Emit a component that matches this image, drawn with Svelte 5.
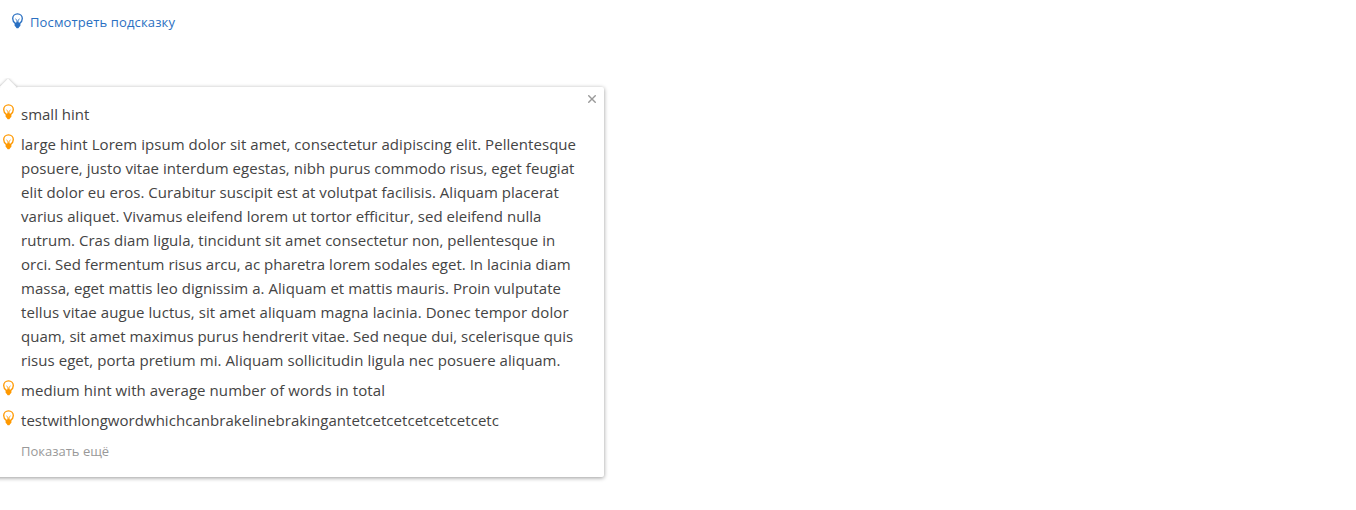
<script>
  const hints = [
    [{ text: 'small hint', tracking: 0 }],
    [
      { text: 'large hint Lorem ipsum dolor sit amet, consectetur adipiscing elit. Pellentesque', tracking: 0.05 },
      { text: 'posuere, justo vitae interdum egestas, nibh purus commodo risus, eget feugiat', tracking: 0.05 },
      { text: 'elit dolor eu eros. Curabitur suscipit est at volutpat facilisis. Aliquam placerat', tracking: 0.05 },
      { text: 'varius aliquet. Vivamus eleifend lorem ut tortor efficitur, sed eleifend nulla', tracking: 0.03 },
      { text: 'rutrum. Cras diam ligula, tincidunt sit amet consectetur non, pellentesque in', tracking: 0.03 },
      { text: 'orci. Sed fermentum risus arcu, ac pharetra lorem sodales eget. In lacinia diam', tracking: 0.015 },
      { text: 'massa, eget mattis leo dignissim a. Aliquam et mattis mauris. Proin vulputate', tracking: 0.045 },
      { text: 'tellus vitae augue luctus, sit amet aliquam magna lacinia. Donec tempor dolor', tracking: 0.075 },
      { text: 'quam, sit amet maximus purus hendrerit vitae. Sed neque dui, scelerisque quis', tracking: 0 },
      { text: 'risus eget, porta pretium mi. Aliquam sollicitudin ligula nec posuere aliquam.', tracking: 0.06 }
    ],
    [{ text: 'medium hint with average number of words in total', tracking: 0.075 }],
    [{ text: 'testwithlongwordwhichcanbrakelinebrakingantetcetcetcetcetcetcetc', tracking: 0.04 }]
  ];
</script>

{#snippet bulb()}
  <svg class="bulb" viewBox="0 0 11 16" width="11" height="16" aria-hidden="true">
    <path d="M3.2 10.2C1.7 9.3.7 7.5.7 5.6a4.8 4.8 0 0 1 9.6 0C10.3 7.5 9.3 9.3 7.8 10.2" fill="none" stroke="currentColor" stroke-width="1.35" />
    <path d="M3.4 5.9 5 7.4v3M7.6 5.9 6 7.4v3" fill="none" stroke="currentColor" stroke-width=".9" />
    <path d="M2.6 9.8h1.7l.5-1h1.4l.5 1h1.7v2.9L7.2 14l-.8 1.2H4.6L3.8 14l-1.2-1.3z" fill="currentColor" />
  </svg>
{/snippet}

<main>
  <button class="trigger">{@render bulb()}<span>Посмотреть подсказку</span></button>
  <section class="popup">
    <span class="arrow"></span>
    <button class="close" aria-label="Закрыть">
      <svg viewBox="0 0 8 8" width="8" height="8"><path d="M.3.3l7.4 7.4M7.7.3L.3 7.7" stroke="#999" stroke-width="1.4" /></svg>
    </button>
    <ul>
      {#each hints as lines}
        <li>
          {@render bulb()}
          <div class="text">
            {#each lines as line}<div style="letter-spacing: {line.tracking}px">{line.text}</div>{/each}
          </div>
        </li>
      {/each}
    </ul>
    <button class="more">Показать ещё</button>
  </section>
</main>

<style>
  :global(body) { background: #fff; }
  main {
    height: 510px;
    overflow: hidden;
    font-family: "Open Sans", "Noto Sans", sans-serif;
    color: #444;
  }
  button {
    border: 0;
    padding: 0;
    background: none;
    font: inherit;
    cursor: pointer;
  }
  .bulb { display: block; flex: none; }
  .trigger {
    display: flex;
    gap: 7px;
    margin: 13px 0 0 12px;
    color: #2a70c2;
    font-size: 13px;
    line-height: 18px;
    height: 18px;
    letter-spacing: .13px;
    white-space: nowrap;
  }
  .popup {
    position: relative;
    box-sizing: border-box;
    width: 614px;
    height: 390px;
    margin: 56px 0 0 -10px;
    padding: 15px 0 0 13px;
    background: #fff;
    border-radius: 2px;
    box-shadow: 0 1px 4px rgba(0, 0, 0, .4);
  }
  .arrow {
    position: absolute;
    left: 8px;
    top: -9px;
    width: 20px;
    height: 10px;
    overflow: hidden;
  }
  .arrow::before {
    content: "";
    position: absolute;
    left: 4px;
    top: 3px;
    width: 12px;
    height: 12px;
    background: #fff;
    transform: rotate(45deg);
    box-shadow: 0 0 3px rgba(0, 0, 0, .3);
  }
  .close { position: absolute; top: 8px; right: 8px; width: 8px; height: 8px; }
  .close svg { display: block; }
  ul {
    display: flex;
    flex-direction: column;
    gap: 6px;
    margin: 0;
    padding: 0;
    list-style: none;
  }
  li { display: flex; gap: 7px; }
  li .bulb { margin-top: 2px; color: #f90; }
  .text { font-size: 15px; line-height: 24px; white-space: nowrap; }
  .more {
    display: block;
    margin: 10px 0 0 18px;
    color: #999;
    font-size: 13px;
    line-height: 18px;
  }
</style>
